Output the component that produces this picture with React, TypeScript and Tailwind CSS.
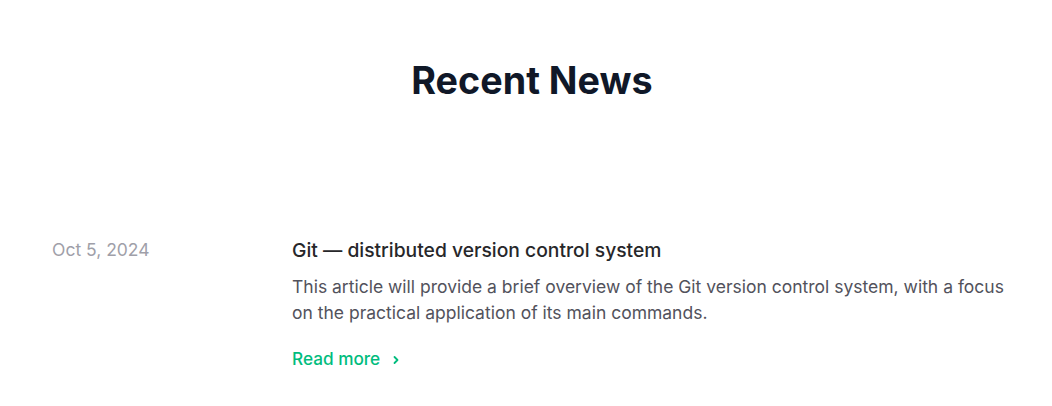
export default function App() {
  return (
    <div className="min-h-screen bg-white" style={{ fontFamily: "Inter, 'Noto Sans', sans-serif" }}>
      <div className="pl-[52px] pr-12 pt-[59px]">
        <h2 className="pl-[8px] text-center text-[37.7px] font-bold leading-[42px] text-gray-900">Recent News</h2>
        <div className="mt-[135px] flex">
          <div className="w-[240px] shrink-0 text-[17.5px] leading-7 text-zinc-400">Oct 5, 2024</div>
          <div className="flex-1">
            <h3 className="text-[19.3px] font-medium leading-7 text-zinc-800">Git — distributed version control system</h3>
            <p className="mt-[10px] text-[17.5px] leading-[26px] text-zinc-600">
              This article will provide a brief overview of the Git version control system, with a focus on the practical application of its main commands.
            </p>
            <a href="#" className="mt-[19px] inline-flex items-center text-[17.2px] font-medium leading-7 text-emerald-500">
              Read more
              <svg className="ml-[12px] mt-[1px]" width="8" height="10" viewBox="0 0 8 10" fill="none">
                <path d="M2.5 2 L5.5 5 L2.5 8" stroke="currentColor" strokeWidth="1.8" strokeLinecap="round" strokeLinejoin="round" />
              </svg>
            </a>
          </div>
        </div>
      </div>
    </div>
  );
}
